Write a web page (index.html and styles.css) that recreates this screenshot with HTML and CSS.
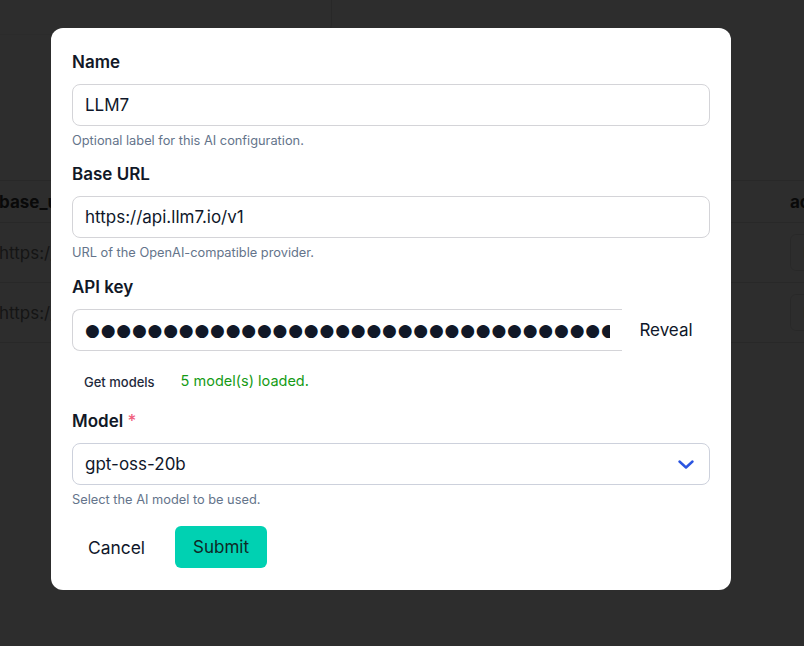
FILE: index.html
```html
<!DOCTYPE html>
<html lang="en">
<head>
<meta charset="utf-8">
<title>AI configuration</title>
<link rel="stylesheet" href="styles.css">
</head>
<body>
<div class="page">
  <div class="topcard"></div>
  <div class="table">
    <div class="trow thead">
      <div class="cell c-url">base_url</div>
      <div class="cell c-act">actions</div>
    </div>
    <div class="trow">
      <div class="cell c-url light">https://api.llm7.io/v1</div>
      <div class="cell c-act"><span class="ghostbtn">Edit</span></div>
    </div>
    <div class="trow">
      <div class="cell c-url light">https://api.openai.com/v1</div>
      <div class="cell c-act"><span class="ghostbtn">Edit</span></div>
    </div>
  </div>
</div>

<div class="backdrop"></div>

<div class="modal">
  <form class="form">
    <div class="field">
      <label class="label">Name</label>
      <input class="input" type="text" value="LLM7">
      <p class="help">Optional label for this AI configuration.</p>
    </div>
    <div class="field">
      <label class="label">Base URL</label>
      <input class="input" type="text" value="https://api.llm7.io/v1">
      <p class="help">URL of the OpenAI-compatible provider.</p>
    </div>
    <div class="field field-key">
      <label class="label">API key</label>
      <div class="addon">
        <input class="input input-key" type="text" aria-label="API key (hidden)" value="●●●●●●●●●●●●●●●●●●●●●●●●●●●●●●●●●●●●●●●●●●●●">
        <button type="button" class="btn-text reveal">Reveal</button>
      </div>
      <div class="models-row">
        <button type="button" class="btn-small">Get models</button>
        <span class="success">5 model(s) loaded.</span>
      </div>
    </div>
    <div class="field">
      <label class="label">Model <span class="req">*</span></label>
      <div class="select">
        <span class="select-value">gpt-oss-20b</span>
        <svg class="chevron" width="16" height="10" viewBox="0 0 16 10"><path d="M1.5 1.5 L8 7.5 L14.5 1.5" fill="none" stroke="#2b55e0" stroke-width="2.4" stroke-linecap="round" stroke-linejoin="round"/></svg>
      </div>
      <p class="help">Select the AI model to be used.</p>
    </div>
    <div class="actions">
      <button type="button" class="btn-text cancel">Cancel</button>
      <button type="button" class="btn-primary">Submit</button>
    </div>
  </form>
</div>
</body>
</html>
```
FILE: styles.css
```css
* { box-sizing: border-box; }
html, body { margin: 0; padding: 0; }
body {
  width: 804px;
  height: 646px;
  overflow: hidden;
  background: #ffffff;
  font-family: Inter, "Noto Sans", sans-serif;
  color: #0f172a;
}

/* underlying page */
.page { position: relative; height: 646px; overflow: hidden; }
.topcard {
  width: 332px;
  height: 35px;
  border-right: 1px solid #dbdbdb;
  border-bottom: 1px solid #ededed;
  border-bottom-right-radius: 10px;
  background: #fafafa;
}
.table { margin-top: 145px; margin-left: -1px; width: 805px; overflow: hidden; }
.trow {
  display: flex;
  height: 60px;
  align-items: center;
  border-bottom: 1px solid #dbdbdb;
}
.thead { height: 43px; border-top: 1px solid #dbdbdb; font-weight: 700; color: #000; }
.cell { font-size: 17px; white-space: nowrap; }
.c-url { width: 791px; flex: none; }
.c-act { flex: 1; overflow: hidden; }
.light { color: #555; }
.ghostbtn {
  display: inline-block;
  border: 1px solid #dbdbdb;
  border-radius: 6px;
  padding: 9px 12px;
  background: #fff;
  font-size: 14px;
}

.backdrop {
  position: fixed;
  inset: 0;
  background: rgba(10, 10, 10, 0.86);
}

/* modal */
.modal {
  position: fixed;
  left: 51px;
  top: 28px;
  width: 680px;
  background: #fff;
  border-radius: 12px;
  padding: 22px 21px 22px 21px;
}
.form { display: flex; flex-direction: column; }
.field { display: flex; flex-direction: column; margin-bottom: 13px; }
.field-key { margin-top: 1px; }
.label {
  font-size: 17px;
  font-weight: 600;
  line-height: 24px;
  color: #111827;
  margin-bottom: 10px;
}
.req { color: #f0607e; font-weight: 500; }
.input {
  height: 42px;
  width: 100%;
  border: 1px solid #d4d4d8;
  border-radius: 8px;
  padding: 0 12px;
  font-family: Inter, "Noto Sans", sans-serif;
  font-size: 17px;
  color: #0f172a;
  background: #fff;
  outline: none;
}
.help {
  margin: 6px 0 0;
  font-size: 12.8px;
  line-height: 17px;
  color: #64748b;
}

.addon { display: flex; }
.input-key {
  flex: 1;
  border-radius: 8px 0 0 8px;
  border-right: none;
  font-family: "DejaVu Sans", sans-serif;
  font-size: 17px;
  letter-spacing: 0.8px;
  color: #111827;
}
.reveal {
  width: 88px;
  height: 42px;
  font-size: 17px;
}
.btn-text {
  background: transparent;
  border: none;
  font-family: Inter, "Noto Sans", sans-serif;
  color: #0f172a;
  cursor: pointer;
}
.models-row {
  display: flex;
  align-items: center;
  gap: 14px;
  margin-top: 14px;
  height: 30px;
  margin-bottom: 1px;
}
.btn-small {
  background: transparent;
  border: none;
  font-family: Inter, "Noto Sans", sans-serif;
  font-size: 13px;
  font-weight: 500;
  color: #1e293b;
  padding: 4px 12px 0;
  height: 30px;
}
.success { font-size: 14.5px; color: #169b16; }

.select {
  height: 42px;
  border: 1px solid #cdd1dc;
  border-radius: 8px;
  padding: 0 15px 0 12px;
  display: flex;
  align-items: center;
  justify-content: space-between;
  font-size: 17px;
}
.chevron { margin-top: 2px; }

.actions { display: flex; align-items: center; gap: 14px; margin-top: 5px; }
.cancel {
  height: 42px;
  padding: 0 16px;
  font-size: 17.4px;
}
.btn-primary {
  height: 42px;
  padding: 0 18px;
  background: #00d1b2;
  border: none;
  border-radius: 6px;
  font-family: Inter, "Noto Sans", sans-serif;
  font-size: 17px;
  color: #0e2a26;
}
```
